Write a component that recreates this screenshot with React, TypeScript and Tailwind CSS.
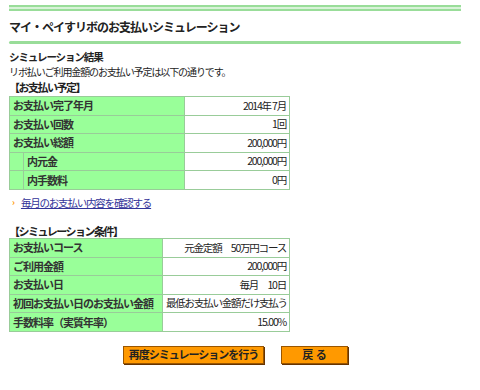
import React from "react";

const font = { fontFamily: '"Noto Sans CJK JP", "Noto Sans", sans-serif' };

type Row = { label: string; value: string; sub?: boolean };

const schedule: Row[] = [
  { label: "お支払い完了年月", value: "2014年 7月" },
  { label: "お支払い回数", value: "1回" },
  { label: "お支払い総額", value: "200,000円" },
  { label: "内元金", value: "200,000円", sub: true },
  { label: "内手数料", value: "0円", sub: true },
];

const conditions: Row[] = [
  { label: "お支払いコース", value: "元金定額　50万円コース" },
  { label: "ご利用金額", value: "200,000円" },
  { label: "お支払い日", value: "毎月　10日" },
  { label: "初回お支払い日のお支払い金額", value: "最低お支払い金額だけ支払う" },
  { label: "手数料率（実質年率）", value: "15.00%" },
];

function ResultTable({ rows, labelWidth }: { rows: Row[]; labelWidth: string }) {
  return (
    <table className="w-[281px] table-fixed border-collapse border border-[#99cc99] text-[11px] leading-none">
      <colgroup>
        <col className="w-[14px]" />
        <col className={labelWidth} />
        <col />
      </colgroup>
      <tbody>
        {rows.map((row, i) => (
          <tr key={i} className="h-[18.6px]">
            {row.sub ? (
              <>
                <td className="border border-[#99cc99] bg-[#99ff99]"></td>
                <td className="whitespace-nowrap border border-[#99cc99] bg-[#99ff99] px-[3px] font-bold tracking-[-1px] text-[#333]">
                  {row.label}
                </td>
              </>
            ) : (
              <td colSpan={2} className="whitespace-nowrap border border-[#99cc99] bg-[#99ff99] px-[3px] font-bold tracking-[-1px] text-[#333]">
                {row.label}
              </td>
            )}
            <td className="whitespace-nowrap border border-[#99cc99] bg-white px-[3px] text-right text-[10.5px] tracking-[-1.2px] text-[#222]">
              {row.value}
            </td>
          </tr>
        ))}
      </tbody>
    </table>
  );
}

export default function App() {
  return (
    <div className="h-[390px] w-[480px] bg-white px-[9px] pt-[5px] text-[#222]" style={font}>
      {/* top double rule */}
      <div className="h-[6px] w-[452px] border-y-2 border-[#99dd99] bg-[#d8f2d8]"></div>

      <h1 className="mt-[9px] text-[12px] font-bold leading-[13px] tracking-[-1px] text-[#222]">マイ・ペイすリボのお支払いシミュレーション</h1>

      <div className="mt-[8px] h-[3px] w-[452px] rounded-sm bg-[#99dd99]"></div>

      <h2 className="mt-[5px] text-[10.5px] font-bold leading-[15px] tracking-[-1.1px]">シミュレーション結果</h2>
      <p className="text-[10px] leading-[15px] tracking-[-1.1px]">リボ払いご利用金額のお支払い予定は以下の通りです。</p>

      <h3 className="mt-[2px] mb-[2px] text-[11px] font-bold leading-[13px] tracking-[-1.5px]">【お支払い予定】</h3>
      <ResultTable rows={schedule} labelWidth="w-[161px]" />

      <div className="mt-[7px] flex h-[12px] items-center gap-[6px] pl-[3px] text-[10.5px] leading-[12px]">
        <span className="text-[9px] font-bold text-[#ff9900]">›</span>
        <a href="#" className="tracking-[-1.2px] text-[#333399] underline">毎月のお支払い内容を確認する</a>
      </div>

      <h3 className="mt-[16px] mb-[1px] text-[11px] font-bold leading-[12px] tracking-[-1.5px]">【シミュレーション条件】</h3>
      <ResultTable rows={conditions} labelWidth="w-[139px]" />

      <div className="mt-[14px] flex gap-[17px] pl-[114px]">
        <button className="h-[18px] w-[141px] whitespace-nowrap border border-[#995500] bg-[#ff9900] text-[11px] font-bold leading-none tracking-[-1px] text-[#222] shadow-[1px_1px_0_#663300]">
          再度シミュレーションを行う
        </button>
        <button className="h-[18px] w-[67px] whitespace-nowrap border border-[#995500] bg-[#ff9900] text-[11px] font-bold leading-none text-[#222] shadow-[1px_1px_0_#663300]">
          戻 る
        </button>
      </div>
    </div>
  );
}
